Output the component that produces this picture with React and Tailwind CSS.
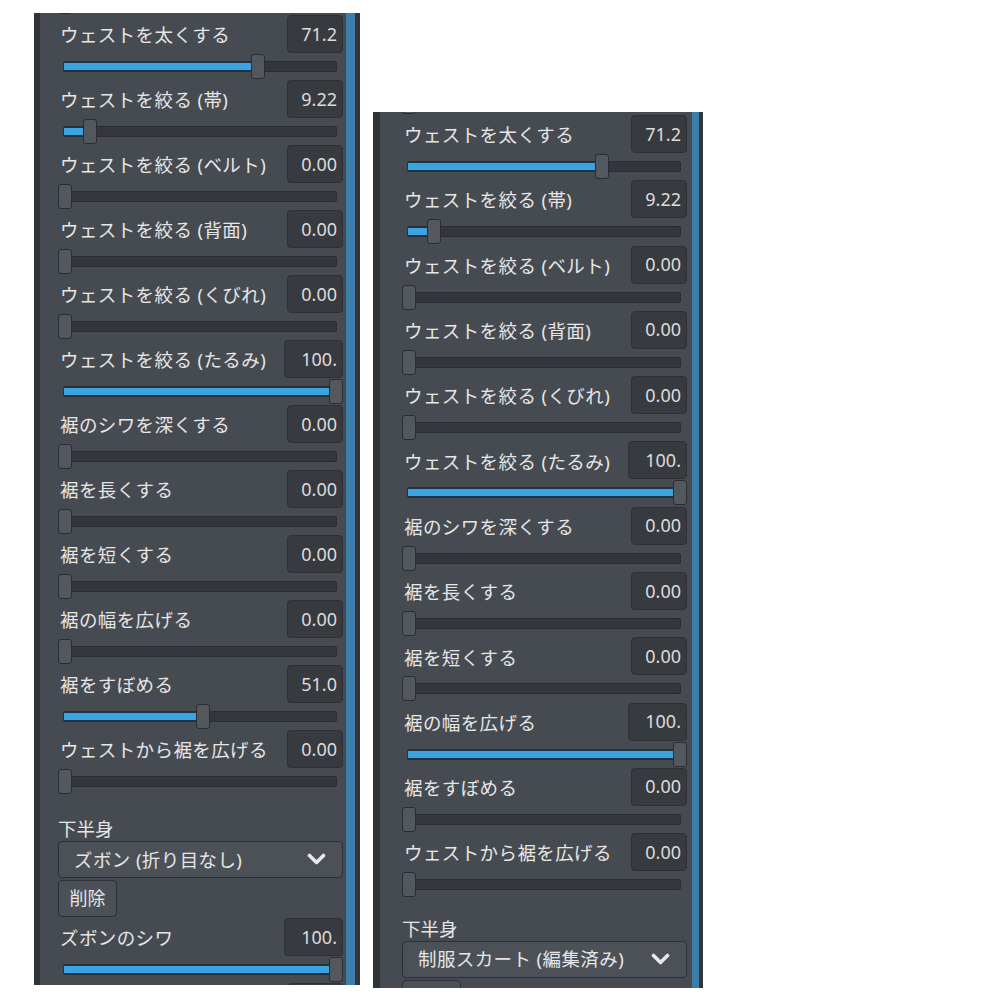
import React from 'react';

const leftRows = [
    ['ウェストを太くする', '71.2', 0.712],
    ['ウェストを絞る (帯)', '9.22', 0.0922],
    ['ウェストを絞る (ベルト)', '0.00', 0],
    ['ウェストを絞る (背面)', '0.00', 0],
    ['ウェストを絞る (くびれ)', '0.00', 0],
    ['ウェストを絞る (たるみ)', '100.', 1],
    ['裾のシワを深くする', '0.00', 0],
    ['裾を長くする', '0.00', 0],
    ['裾を短くする', '0.00', 0],
    ['裾の幅を広げる', '0.00', 0],
    ['裾をすぼめる', '51.0', 0.51],
    ['ウェストから裾を広げる', '0.00', 0],
];

const rightRows = [
    ['ウェストを太くする', '71.2', 0.712],
    ['ウェストを絞る (帯)', '9.22', 0.0922],
    ['ウェストを絞る (ベルト)', '0.00', 0],
    ['ウェストを絞る (背面)', '0.00', 0],
    ['ウェストを絞る (くびれ)', '0.00', 0],
    ['ウェストを絞る (たるみ)', '100.', 1],
    ['裾のシワを深くする', '0.00', 0],
    ['裾を長くする', '0.00', 0],
    ['裾を短くする', '0.00', 0],
    ['裾の幅を広げる', '100.', 1],
    ['裾をすぼめる', '0.00', 0],
    ['ウェストから裾を広げる', '0.00', 0],
];

// handle travels 271px across the 285px content width
const Slider = ({ pct, className = '', tall }) => {
    const left = Math.round(pct * 271);
    return (
        <div className={`relative ${tall ? 'h-[27.3px]' : 'h-[27px]'} ${className}`}>
            <div className="absolute left-[5px] right-[6px] top-[8px] h-[11px] rounded-[2px] border border-[#2a2d31] bg-[#33373b]">
                <div
                    className="absolute left-0 top-[1px] bottom-[1px] bg-[#3ba4e0] shadow-[0_0_0_1px_#1f3646]"
                    style={{ width: Math.max(0, left + 2) }}
                />
            </div>
            <div
                className="absolute top-[1px] h-[25px] w-[14px] rounded-[3px] border border-[#2a2d31] bg-[#53585e]"
                style={{ left }}
            />
        </div>
    );
};

const NumBox = ({ value }) => (
    <div
        className={`flex h-[38px] shrink-0 items-center justify-end rounded-[4px] border border-[#2d3034] bg-[#373b40] pr-[5px] text-[18px] text-[#dcdcdc] ${
            value.startsWith('100') ? 'w-[59px]' : 'w-[56px]'
        }`}
    >
        {value}
    </div>
);

const Row = ({ label, value, pct, tall }) => (
    <div>
        <div className="flex h-[38px] items-center justify-between">
            <span className="pl-[2px] pt-[2px] text-[18.5px] tracking-[0.4px] text-[#e6e6e6]">{label}</span>
            <NumBox value={value} />
        </div>
        <Slider pct={pct} tall={tall} />
    </div>
);

const Chevron = () => (
    <svg width="19" height="13" viewBox="0 0 19 13" fill="none">
        <polyline points="2.5,2.5 9.5,9.5 16.5,2.5" stroke="#e8e8e8" strokeWidth="3.6" strokeLinecap="round" strokeLinejoin="round" />
    </svg>
);

const Dropdown = ({ text }) => (
    <div className="flex h-[37px] items-center justify-between rounded-[4px] border border-[#2d3034] bg-[#4c5157] pl-[15px] pr-[16px]">
        <span className="text-[18.5px] tracking-[0.4px] text-[#e6e6e6]">{text}</span>
        <Chevron />
    </div>
);

const Button = ({ children }) => (
    <div className="mt-[2px] flex h-[37px] w-[59px] items-center justify-center rounded-[4px] border border-[#2d3034] bg-[#4c5157] text-[18px] text-[#e6e6e6]">
        {children}
    </div>
);

const Panel = ({ rows, dropdown, variant, children }) => {
    const isLeft = variant === 'left';
    return (
        <div className={`flex overflow-hidden bg-[#464b51] ${isLeft ? 'mt-[13px] h-[972px] w-[326px]' : 'mt-[112px] h-[876px] w-[330px]'}`}>
            <div className={`shrink-0 bg-[#2f3236] ${isLeft ? 'w-[6px]' : 'w-[7px]'}`} />
            <div className={`w-[285px] shrink-0 ${isLeft ? 'ml-[18px] mr-[3px]' : 'ml-[22px] mr-[5px]'}`}>
                <Slider pct={0} className={isLeft ? '-mt-[25px]' : '-mt-[24px]'} />
                {rows.map(([label, value, pct]) => (
                    <Row key={label} label={label} value={value} pct={pct} tall={!isLeft} />
                ))}
                <div className={`h-[24px] text-[18.5px] leading-[24px] text-[#e6e6e6] ${isLeft ? 'mt-[22px]' : 'mt-[18px]'}`}>下半身</div>
                <Dropdown text={dropdown} />
                {children}
            </div>
            <div className={`shrink-0 bg-[#3c7eaa] ${isLeft ? 'w-[9px]' : 'w-[7px]'}`} />
            <div className={`shrink-0 bg-[#32363a] ${isLeft ? 'w-[5px]' : 'w-[4px]'}`} />
        </div>
    );
};

export default function App() {
    return (
        <div
            className="flex h-[1000px] w-[1000px] items-start gap-[13px] bg-white pl-[34px]"
            style={{ fontFamily: '"Noto Sans", "Noto Sans CJK JP", sans-serif' }}
        >
            <Panel rows={leftRows} dropdown="ズボン (折り目なし)" variant="left">
                <Button>削除</Button>
                <div className="mt-[1px]">
                    <Row label="ズボンのシワ" value="100." pct={1} />
                </div>
                <div className="flex justify-end">
                    <div className="h-[38px] w-[56px] rounded-[4px] border border-[#2d3034] bg-[#373b40]" />
                </div>
            </Panel>
            <Panel rows={rightRows} dropdown="制服スカート (編集済み)" variant="right">
                <div className="mt-[2px] h-[37px] w-[59px] rounded-[4px] border border-[#2d3034] bg-[#4c5157]" />
            </Panel>
        </div>
    );
}
